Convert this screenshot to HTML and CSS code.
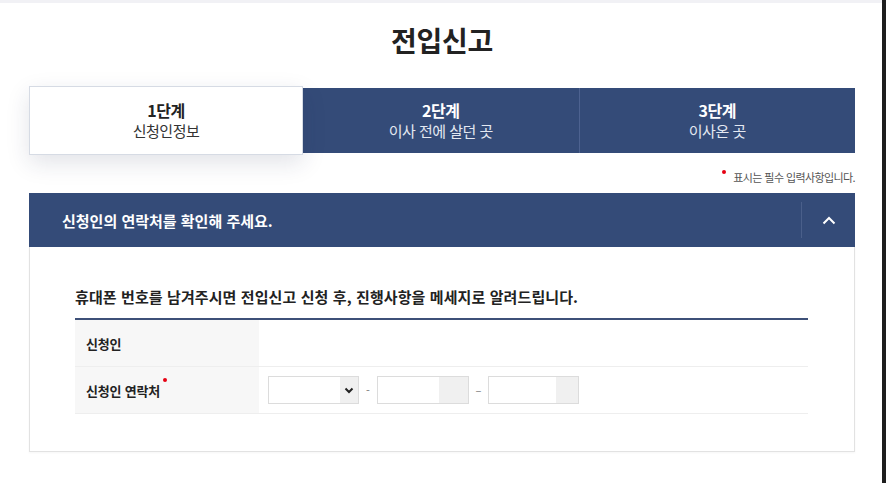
FILE: index.html
```html
<!DOCTYPE html>
<html lang="ko">
<head>
<meta charset="utf-8">
<title>전입신고</title>
<link rel="stylesheet" href="styles.css">
</head>
<body>
<div class="frame">
  <div class="page">
    <div class="topband"></div>
    <main class="main">
      <h1 class="title">전입신고</h1>
      <ol class="steps">
        <li class="step active"><strong>1단계</strong><span>신청인정보</span></li>
        <li class="step"><strong>2단계</strong><span>이사 전에 살던 곳</span></li>
        <li class="step"><strong>3단계</strong><span>이사온 곳</span></li>
      </ol>
      <p class="note"><i class="dot"></i>표시는 필수 입력사항입니다.</p>
      <section class="panel">
        <header class="panel-head">
          <h2>신청인의 연락처를 확인해 주세요.</h2>
          <button class="toggle" type="button" aria-label="접기">
            <svg width="14" height="9" viewBox="0 0 14 9"><path d="M1.5 7.5 7 2l5.5 5.5" fill="none" stroke="#fff" stroke-width="2"/></svg>
          </button>
        </header>
        <div class="panel-body">
          <p class="lead">휴대폰 번호를 남겨주시면 전입신고 신청 후, 진행사항을 메세지로 알려드립니다.</p>
          <div class="table">
            <div class="row">
              <div class="th">신청인</div>
              <div class="td"></div>
            </div>
            <div class="row">
              <div class="th">신청인 연락처<i class="req"></i></div>
              <div class="td phone">
                <div class="select"><span class="sel-arrow"><svg width="10" height="7" viewBox="0 0 10 7"><path d="M1.5 1.5 5 5l3.5-3.5" fill="none" stroke="#222" stroke-width="2"/></svg></span></div>
                <span class="sep">-</span>
                <div class="input"><span class="fill"></span></div>
                <span class="sep wide">–</span>
                <div class="input short"><span class="fill"></span></div>
              </div>
            </div>
          </div>
        </div>
      </section>
    </main>
  </div>
  <div class="edge"></div>
</div>
</body>
</html>
```

FILE: styles.css
```css
* { box-sizing: border-box; }
html, body { margin: 0; padding: 0; }
body {
  font-family: "Noto Sans CJK KR", "Noto Sans", sans-serif;
  color: #222;
  background: #fff;
  width: 886px;
  height: 483px;
  overflow: hidden;
}
.frame { display: flex; height: 483px; }
.page { flex: 1; display: flex; flex-direction: column; }
.edge { width: 4px; background: #1e1e1e; }
.topband { height: 3px; background: #f1f1f5; }
.main { padding: 0 27px 0 29px; }
.title {
  margin: 19px 0 0;
  text-align: center;
  font-size: 28px;
  line-height: 36px;
  font-weight: 700;
  letter-spacing: -0.3px;
  color: #222;
}
.steps {
  list-style: none;
  margin: 28px 0 0;
  padding: 0;
  display: flex;
  align-items: center;
}
.step {
  flex: 1;
  height: 65px;
  background: #344b78;
  color: #fff;
  display: flex;
  flex-direction: column;
  align-items: center;
  justify-content: center;
  text-align: center;
  border-left: 1px solid #4d6290;
}
.step strong { font-size: 16px; line-height: 20px; font-weight: 700; letter-spacing: -0.5px; }
.step span { font-size: 15px; line-height: 22px; color: #e3e8f1; letter-spacing: -0.5px; }
.step.active {
  flex: 0 0 274px;
  height: 69px;
  background: #fff;
  color: #222;
  border: 1px solid #d6dbe4;
  box-shadow: 0 8px 22px rgba(30, 40, 80, 0.13);
  position: relative;
  z-index: 1;
}
.step.active span { color: #333; }
.step.active + .step { border-left: 0; }
.note {
  margin: 12px 0 0;
  text-align: right;
  font-size: 11px;
  line-height: 20px;
  color: #555;
  letter-spacing: -0.6px;
}
.dot {
  display: inline-block;
  width: 4px; height: 4px;
  border-radius: 50%;
  background: #e60012;
  vertical-align: 8px;
  margin-right: 7px;
}
.panel { margin-top: 6px; }
.panel-head {
  height: 54px;
  background: #344b78;
  display: flex;
  align-items: center;
  padding-left: 33px;
}
.panel-head h2 {
  flex: 1;
  margin: 0;
  font-size: 15px;
  font-weight: 700;
  color: #fff;
  letter-spacing: 0;
}
.toggle {
  width: 54px;
  height: 36px;
  border: 0;
  border-left: 1px solid #4a5f8a;
  background: transparent;
  display: flex;
  align-items: center;
  justify-content: center;
  padding: 0;
}
.panel-body {
  border: 1px solid #e2e2e2;
  border-top: 0;
  padding: 39px 46px 37px 45px;
  box-shadow: 0 1px 2px rgba(0,0,0,0.04);
}
.lead {
  margin: 0;
  font-size: 15px;
  line-height: 22px;
  font-weight: 700;
  color: #222;
  letter-spacing: 0.1px;
}
.table { margin-top: 10px; border-top: 2px solid #3e5078; }
.row { display: flex; height: 47px; border-bottom: 1px solid #eeeeee; }
.th {
  width: 184px;
  background: #f7f7f7;
  font-size: 13px;
  font-weight: 700;
  color: #222;
  display: flex;
  align-items: center;
  padding-left: 11px;
  letter-spacing: -0.2px;
}
.req {
  display: inline-block;
  width: 4px; height: 4px;
  border-radius: 50%;
  background: #e60012;
  align-self: flex-start;
  margin-top: 11px;
  margin-left: 3px;
}
.td { flex: 1; display: flex; align-items: center; padding-left: 9px; }
.select, .input {
  height: 28px;
  border: 1px solid #dcdcdc;
  background: #fff;
  display: flex;
  justify-content: flex-end;
}
.select { width: 91px; }
.sel-arrow {
  width: 18px;
  background: #f0f0f0;
  display: flex;
  align-items: center;
  justify-content: center;
}
.input { width: 92px; }
.input .fill { width: 29px; background: #f0f0f0; }
.input.short .fill { width: 22px; }
.input.short { width: 91px; }
.sep { width: 18px; text-align: center; font-size: 11px; color: #777; }
.sep.wide { width: 19px; }
```
